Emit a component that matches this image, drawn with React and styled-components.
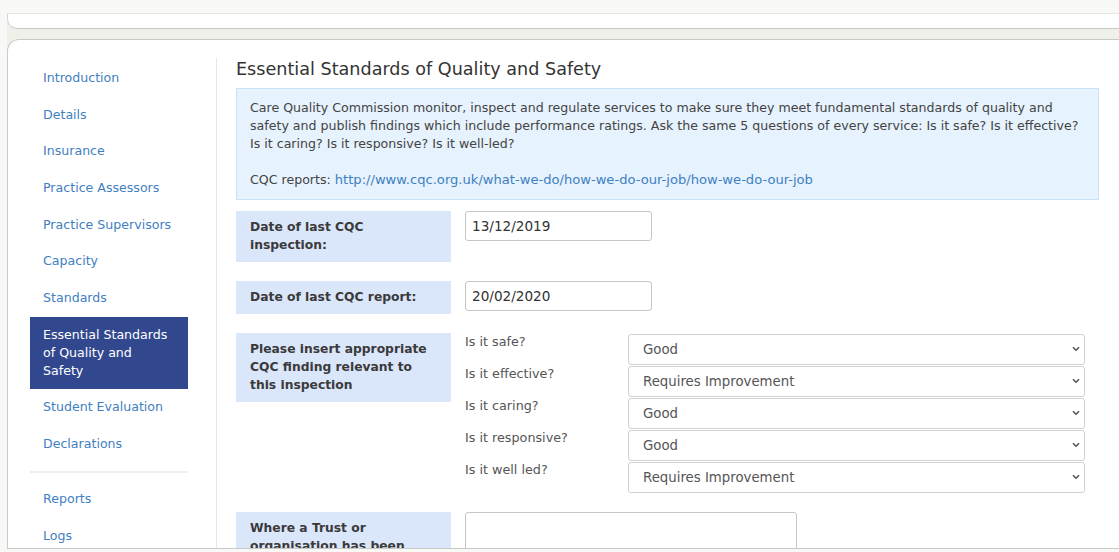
import React from "react";
import styled, { createGlobalStyle } from "styled-components";

const GlobalStyle = createGlobalStyle`
  html, body {
    margin: 0;
    padding: 0;
    height: 552px;
    overflow: hidden;
    background: #f8f8f6;
    font-family: "DejaVu Sans", Verdana, sans-serif;
    font-size: 12.6px;
    color: #333;
  }
  * { box-sizing: border-box; }
`;

const Frame = styled.div`
  margin: 0 -14px 0 7px;
  padding-top: 13px;
  background: linear-gradient(#f8f8f6 0 13px, #f0f0eb 13px);
  display: flex;
  flex-direction: column;
  gap: 10px;
`;

const TopBar = styled.div`
  height: 16px;
  background: #fff;
  border-top: 1px solid #e6e6e4;
  border-bottom: 1px solid #c9c9c6;
  border-left: 1px solid #d4d4d1;
  border-bottom-left-radius: 10px;
`;

const Card = styled.div`
  height: 510px;
  background: #fff;
  border: 1px solid #c9c9c6;
  border-right: none;
  border-top-left-radius: 12px;
  overflow: hidden;
  display: flex;
  align-items: flex-start;
  padding-top: 18px;
`;

const Sidebar = styled.nav`
  width: 208px;
  padding: 2px 28px 0 22px;
  flex-shrink: 0;
`;

const NavItem = styled.a`
  display: block;
  padding: 9px 13px;
  line-height: 18px;
  margin-bottom: 0.67px;
  font-size: 12.6px;
  text-decoration: none;
  color: ${(p) => (p.$active ? "#fff" : "#3f80c2")};
  background: ${(p) => (p.$active ? "#31488e" : "transparent")};
`;

const NavDivider = styled.hr`
  border: none;
  border-top: 2px solid #eeeeee;
  margin: 9px 0 8px;
`;

const Content = styled.main`
  flex: 1;
  border-left: 1px solid #e6e6e6;
  padding: 0 20px 0 19px;
  min-height: 600px;
`;

const Title = styled.h1`
  margin: 1px 0 9px;
  font-size: 17.6px;
  font-weight: normal;
  line-height: 20px;
  color: #333;
`;

const InfoBox = styled.div`
  width: 863px;
  background: #e6f2fd;
  border: 1px solid #c9e1f7;
  padding: 10px 13px;
  line-height: 18px;
  color: #444;
  margin-bottom: 11px;

  p { margin: 0 0 18px; }
  p:last-child { margin: 0; }
`;

const Link = styled.a`
  color: #3f80c2;
  font-size: 13.1px;
  text-decoration: none;
`;

const FormRow = styled.div`
  display: flex;
  align-items: flex-start;
  gap: 14px;
  margin-bottom: 19px;
`;

const FieldLabel = styled.div`
  width: 215px;
  flex-shrink: 0;
  background: #dae6fa;
  padding: 7px 14px 8px 14px;
  line-height: 18px;
  font-size: 12.3px;
  font-weight: bold;
  color: #3a3a3a;
`;

const TextInput = styled.input`
  width: 187px;
  height: 30px;
  border: 1px solid #c6c6c6;
  border-radius: 3px;
  padding: 0 6px;
  font-family: inherit;
  font-size: 13.6px;
  color: #333;
  background: #fff;
`;

const TextArea = styled.textarea`
  width: 332px;
  height: 80px;
  border: 1px solid #c6c6c6;
  border-radius: 3px;
  resize: none;
  font-family: inherit;
`;

const Findings = styled.div`
  display: flex;
  flex-direction: column;
`;

const FindingRow = styled.div`
  display: flex;
  align-items: flex-start;
  height: 32px;
`;

const Question = styled.span`
  width: 163px;
  line-height: 18px;
  font-size: 12.75px;
  color: #555;
`;

const SelectWrap = styled.div`
  position: relative;
  margin-top: 1px;
`;

const Select = styled.select`
  appearance: none;
  -webkit-appearance: none;
  width: 457px;
  height: 31px;
  border: 1px solid #d2d2d2;
  border-radius: 3px;
  background: #fff;
  padding: 0 14px;
  font-family: inherit;
  font-size: 13.3px;
  color: #555;
`;

const Chevron = styled.svg`
  position: absolute;
  right: 5px;
  top: 12px;
  width: 8px;
  height: 6px;
  pointer-events: none;
`;

const nav = [
  "Introduction",
  "Details",
  "Insurance",
  "Practice Assessors",
  "Practice Supervisors",
  "Capacity",
  "Standards",
];

const findings = [
  ["Is it safe?", "Good"],
  ["Is it effective?", "Requires Improvement"],
  ["Is it caring?", "Good"],
  ["Is it responsive?", "Good"],
  ["Is it well led?", "Requires Improvement"],
];

function RatingSelect({ value }) {
  return (
    <SelectWrap>
      <Select defaultValue={value}>
        <option>Outstanding</option>
        <option>Good</option>
        <option>Requires Improvement</option>
        <option>Inadequate</option>
      </Select>
      <Chevron viewBox="0 0 8 6">
        <path d="M1 1.2 L4 4.2 L7 1.2" fill="none" stroke="#555" strokeWidth="1.6" />
      </Chevron>
    </SelectWrap>
  );
}

export default function App() {
  return (
    <>
      <GlobalStyle />
      <Frame>
        <TopBar />
        <Card>
          <Sidebar>
            {nav.map((n) => (
              <NavItem key={n} href="#">{n}</NavItem>
            ))}
            <NavItem $active href="#">Essential Standards of Quality and Safety</NavItem>
            <NavItem href="#">Student Evaluation</NavItem>
            <NavItem href="#">Declarations</NavItem>
            <NavDivider />
            <NavItem href="#">Reports</NavItem>
            <NavItem href="#">Logs</NavItem>
          </Sidebar>
          <Content>
            <Title>Essential Standards of Quality and Safety</Title>
            <InfoBox>
              <p>
                Care Quality Commission monitor, inspect and regulate services to make sure they meet
                fundamental standards of quality and safety and publish findings which include
                performance ratings. Ask the same 5 questions of every service: Is it safe? Is it
                effective? Is it caring? Is it responsive? Is it well-led?
              </p>
              <p>
                CQC reports:{" "}
                <Link href="#">http://www.cqc.org.uk/what-we-do/how-we-do-our-job/how-we-do-our-job</Link>
              </p>
            </InfoBox>
            <FormRow>
              <FieldLabel>Date of last CQC inspection:</FieldLabel>
              <TextInput defaultValue="13/12/2019" />
            </FormRow>
            <FormRow>
              <FieldLabel>Date of last CQC report:</FieldLabel>
              <TextInput defaultValue="20/02/2020" />
            </FormRow>
            <FormRow>
              <FieldLabel>Please insert appropriate CQC finding relevant to this inspection</FieldLabel>
              <Findings>
                {findings.map(([q, v]) => (
                  <FindingRow key={q}>
                    <Question>{q}</Question>
                    <RatingSelect value={v} />
                  </FindingRow>
                ))}
              </Findings>
            </FormRow>
            <FormRow>
              <FieldLabel>Where a Trust or organisation has been rated as requiring improvement</FieldLabel>
              <TextArea />
            </FormRow>
          </Content>
        </Card>
      </Frame>
    </>
  );
}
